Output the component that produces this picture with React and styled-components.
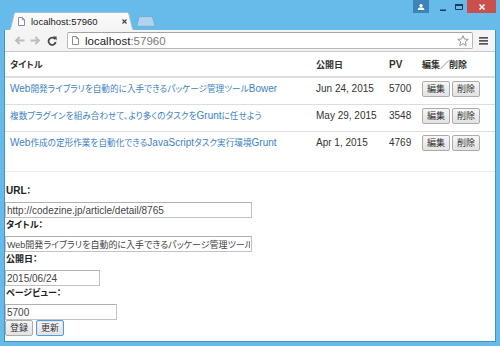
import React from "react";
import styled, { createGlobalStyle } from "styled-components";

const GlobalStyle = createGlobalStyle`
  html, body {
    margin: 0;
    padding: 0;
    background: #fff;
  }
  body {
    font-family: "Liberation Sans", "Noto Sans CJK JP", sans-serif;
  }
  * {
    box-sizing: border-box;
  }
`;

const Window = styled.div`
  width: 500px;
  height: 346px;
  display: flex;
  flex-direction: column;
  padding: 0 4px 4px;
  background: #67bbea;
  overflow: hidden;
`;

const TitleBar = styled.div`
  height: 30px;
  flex-shrink: 0;
  display: flex;
  padding-left: 4px;
`;

const TabStrip = styled.div`
  display: flex;
  align-items: flex-end;
`;

const Tab = styled.div`
  position: relative;
  width: 127px;
  height: 18px;
  display: flex;
  align-items: center;
  padding: 1px 0 0 10px;
  font-size: 9.5px;
  color: #222;
  z-index: 1;

  > svg.shape {
    position: absolute;
    inset: 0;
    z-index: -1;
  }
`;

const TabTitle = styled.span`
  margin-left: 6px;
  flex: 1;
`;

const TabClose = styled.span`
  display: flex;
  margin-right: 8px;
`;

const NewTab = styled.div`
  width: 20px;
  height: 11px;
  margin: 0 0 3px 1px;
  display: flex;
`;

const Controls = styled.div`
  margin-left: auto;
  display: flex;
  align-items: flex-start;
  height: 13px;
`;

const CtrlButton = styled.div`
  width: ${(p) => p.$w}px;
  height: 13px;
  margin-left: ${(p) => p.$gap || 0}px;
  display: flex;
  align-items: center;
  justify-content: center;
  background: ${(p) => p.$bg || "transparent"};
`;

const Client = styled.div`
  flex: 1;
  display: flex;
  flex-direction: column;
  border: 1px solid #4591c9;
  border-top: 0;
  min-height: 0;
`;

const Toolbar = styled.div`
  height: 22px;
  flex-shrink: 0;
  display: flex;
  align-items: center;
  padding: 0 6px 0 6px;
  background: #f4f4f4;
  border-bottom: 1px solid #c9c9c9;
`;

const NavButton = styled.div`
  width: ${(p) => p.$w || 16}px;
  height: 16px;
  display: flex;
  align-items: center;
  justify-content: center;
`;

const Omnibox = styled.div`
  flex: 1;
  height: 17px;
  margin: 0 4px 0 6px;
  display: flex;
  align-items: center;
  padding: 0 3px 0 4px;
  background: #fff;
  border: 1px solid #b7b7b7;
  border-top-color: #a3a3a3;
  border-radius: 2px;
  font-size: 11.5px;
`;

const Host = styled.span`
  margin-left: 6px;
  color: #222;
  flex: 1;
`;

const Port = styled.span`
  color: #7a7a7a;
`;

const Page = styled.main`
  flex: 1;
  background: #fff;
  color: #333;
  font-size: 10px;
  overflow: hidden;
  font-feature-settings: "palt";
`;

/* Japanese runs are set a little smaller than the Latin ones */
const Jp = styled.span`
  font-size: ${(p) => p.$scale}em;
`;

const CJK = /([\u3000-\u9fff\uff00-\uffef]+)/;

const jp = (text, scale = 0.9) =>
  text
    .split(CJK)
    .filter(Boolean)
    .map((part, i) =>
      CJK.test(part) ? (
        <Jp key={i} $scale={scale}>
          {part}
        </Jp>
      ) : (
        part
      )
    );

const Table = styled.table`
  width: 100%;
  border-collapse: collapse;
  table-layout: fixed;
`;

const Th = styled.th`
  width: ${(p) => p.$w}px;
  text-align: left;
  font-weight: bold;
  padding: 6px 5px 4px;
  line-height: 14px;
  border-bottom: 2px solid #ddd;
  white-space: nowrap;
`;

const Td = styled.td`
  padding: 3px 5px 7px;
  line-height: 16px;
  border-top: 1px solid #ddd;
  vertical-align: top;
  white-space: nowrap;
  overflow: hidden;
`;

const TitleLink = styled.a`
  color: #3d81c2;
  text-decoration: none;
`;

const SmallButton = styled.button`
  height: 16px;
  padding: 0 4px;
  margin-right: 2px;
  vertical-align: top;
  font: inherit;
  font-size: 10px;
  line-height: 14px;
  color: #333;
  background: linear-gradient(#f6f6f6, #e2e2e2);
  border: 1px solid ${(p) => (p.$focus ? "#5b9ad8" : "#acacac")};
  border-radius: 2px;
  box-shadow: ${(p) => (p.$focus ? "0 0 0 1px #d6e6f7 inset" : "none")};
`;

const Rule = styled.hr`
  margin: 13px 0 12px;
  border: 0;
  border-top: 1px solid #eee;
`;

const Form = styled.form`
  display: flex;
  flex-direction: column;
  align-items: flex-start;
`;

const Label = styled.label`
  display: block;
  font-weight: bold;
  line-height: 13px;
  margin: 0 0 4px 1px;
  color: #222;
`;

const Input = styled.input`
  display: block;
  width: ${(p) => p.$w}px;
  height: 16px;
  margin: 0;
  padding: 0 1px;
  font: inherit;
  font-size: ${(p) => p.$fs || 10}px;
  color: #444;
  border: 1px solid #c2c2c2;
  border-top-color: #b0b0b0;
  outline: none;
`;

const ButtonRow = styled.div`
  display: flex;
  gap: 1px;
`;

const DocIcon = () => (
  <svg width="7" height="9" viewBox="0 0 7 9">
    <path d="M0.5 0.5H4.3L6.5 2.7V8.5H0.5Z" fill="#fff" stroke="#8d8d8d" />
    <path d="M4.3 0.5V2.7H6.5" fill="none" stroke="#8d8d8d" />
  </svg>
);

const Arrow = ({ flip }) => (
  <svg width="11" height="9" viewBox="0 0 11 9" style={flip ? { transform: "scaleX(-1)" } : undefined}>
    <path d="M10.5 4.5H2M5.6 1L2 4.5L5.6 8" fill="none" stroke="#bcbcbc" strokeWidth="1.8" />
  </svg>
);

const Reload = () => (
  <svg width="10" height="10" viewBox="0 0 10 10">
    <path d="M8 3.1A3.6 3.6 0 1 0 8.7 6" fill="none" stroke="#4a4a4a" strokeWidth="1.8" />
    <path d="M5.8 0.6H9.6V4.4Z" fill="#4a4a4a" />
  </svg>
);

const Star = () => (
  <svg width="12" height="12" viewBox="0 0 12 12">
    <polygon
      points="6,0.6 7.47,4.1 11.3,4.3 8.35,6.8 9.3,10.7 6,8.6 2.7,10.7 3.65,6.8 0.7,4.3 4.53,4.1"
      fill="none"
      stroke="#8a8a8a"
      strokeWidth="0.9"
      strokeLinejoin="round"
    />
  </svg>
);

const Menu = () => (
  <svg width="9" height="8" viewBox="0 0 9 8">
    <rect x="0" y="0" width="9" height="1.7" fill="#555" />
    <rect x="0" y="3" width="9" height="1.7" fill="#555" />
    <rect x="0" y="6" width="9" height="1.7" fill="#555" />
  </svg>
);

const rows = [
  { title: "Web開発ライブラリを自動的に入手できるパッケージ管理ツールBower", date: "Jun 24, 2015", pv: 5700 },
  { title: "複数プラグインを組み合わせて、より多くのタスクをGruntに任せよう", date: "May 29, 2015", pv: 3548 },
  { title: "Web作成の定形作業を自動化できるJavaScriptタスク実行環境Grunt", date: "Apr 1, 2015", pv: 4769 },
];

export default function App() {
  return (
    <>
      <GlobalStyle />
      <Window>
        <TitleBar>
          <TabStrip>
            <Tab>
              <svg className="shape" width="127" height="18" viewBox="0 0 127 18">
                <defs>
                  <linearGradient id="tabg" x1="0" y1="0" x2="0" y2="1">
                    <stop offset="0" stopColor="#fbfbfb" />
                    <stop offset="1" stopColor="#f4f4f4" />
                  </linearGradient>
                </defs>
                <path
                  d="M0 18.5C2 18.5 2.5 17 3 15L6 2.5C6.4 1 7.2 0.5 8.5 0.5H118.5C119.8 0.5 120.6 1 121 2.5L124 15C124.5 17 125 18.5 127 18.5"
                  fill="url(#tabg)"
                  stroke="#a3bfd3"
                />
              </svg>
              <DocIcon />
              <TabTitle>localhost:57960</TabTitle>
              <TabClose>
                <svg width="5" height="5" viewBox="0 0 5 5">
                  <path d="M0.5 0.5L4.5 4.5M4.5 0.5L0.5 4.5" stroke="#444" strokeWidth="1.2" />
                </svg>
              </TabClose>
            </Tab>
            <NewTab>
              <svg width="20" height="11" viewBox="0 0 20 11">
                <path d="M0.8 10.3L2.8 1.6Q3.1 0.6 4.2 0.6H15.2Q16.2 0.6 16.6 1.6L19.3 10.3Z" fill="#aed5ef" stroke="#7ca9cb" />
              </svg>
            </NewTab>
          </TabStrip>
          <Controls>
            <CtrlButton $w={16} $bg="#3d83b7">
              <svg width="8" height="6" viewBox="0 0 8 6">
                <circle cx="4" cy="1.6" r="1.6" fill="#fff" />
                <path d="M0.6 6C0.6 4.2 2 3.6 4 3.6S7.4 4.2 7.4 6Z" fill="#fff" />
              </svg>
            </CtrlButton>
            <CtrlButton $w={16} $gap={6}>
              <svg width="6" height="9" viewBox="0 0 6 9">
                <rect x="0" y="7.5" width="6" height="1.5" fill="#1d3a55" />
              </svg>
            </CtrlButton>
            <CtrlButton $w={16}>
              <svg width="8" height="6" viewBox="0 0 8 6">
                <path d="M0.5 1H7.5V5.5H0.5Z" fill="none" stroke="#1d3a55" />
                <rect x="0" y="0" width="8" height="2" fill="#1d3a55" />
              </svg>
            </CtrlButton>
            <CtrlButton $w={29} $bg="#c9504c">
              <svg width="6" height="6" viewBox="0 0 6 6">
                <path d="M0.5 0.5L5.5 5.5M5.5 0.5L0.5 5.5" stroke="#fff" strokeWidth="1.5" />
              </svg>
            </CtrlButton>
          </Controls>
        </TitleBar>
        <Client>
          <Toolbar>
            <NavButton>
              <Arrow />
            </NavButton>
            <NavButton>
              <Arrow flip />
            </NavButton>
            <NavButton $w={18}>
              <Reload />
            </NavButton>
            <Omnibox>
              <DocIcon />
              <Host>
                localhost<Port>:57960</Port>
              </Host>
              <Star />
            </Omnibox>
            <NavButton $w={12}>
              <Menu />
            </NavButton>
          </Toolbar>
          <Page>
            <Table>
              <thead>
                <tr>
                  <Th $w={306}>{jp("タイトル")}</Th>
                  <Th $w={73}>{jp("公開日")}</Th>
                  <Th $w={33}>PV</Th>
                  <Th $w={78}>{jp("編集／削除")}</Th>
                </tr>
              </thead>
              <tbody>
                {rows.map((r) => (
                  <tr key={r.pv}>
                    <Td>
                      <TitleLink href="#">{jp(r.title, 0.865)}</TitleLink>
                    </Td>
                    <Td>{r.date}</Td>
                    <Td>{r.pv}</Td>
                    <Td>
                      <SmallButton type="button">{jp("編集")}</SmallButton>
                      <SmallButton type="button">{jp("削除")}</SmallButton>
                    </Td>
                  </tr>
                ))}
              </tbody>
            </Table>
            <Rule />
            <Form onSubmit={(e) => e.preventDefault()}>
              <Label>URL{jp("：")}</Label>
              <Input $w={247} defaultValue="http://codezine.jp/article/detail/8765" />
              <Label>{jp("タイトル：")}</Label>
              <Input $w={247} $fs={9} defaultValue="Web開発ライブラリを自動的に入手できるパッケージ管理ツールBower" />
              <Label>{jp("公開日：")}</Label>
              <Input $w={95} defaultValue="2015/06/24" />
              <Label>{jp("ページビュー：")}</Label>
              <Input $w={112} defaultValue="5700" />
              <ButtonRow>
                <SmallButton type="button">{jp("登録")}</SmallButton>
                <SmallButton type="button" $focus>
                  {jp("更新")}
                </SmallButton>
              </ButtonRow>
            </Form>
          </Page>
        </Client>
      </Window>
    </>
  );
}
